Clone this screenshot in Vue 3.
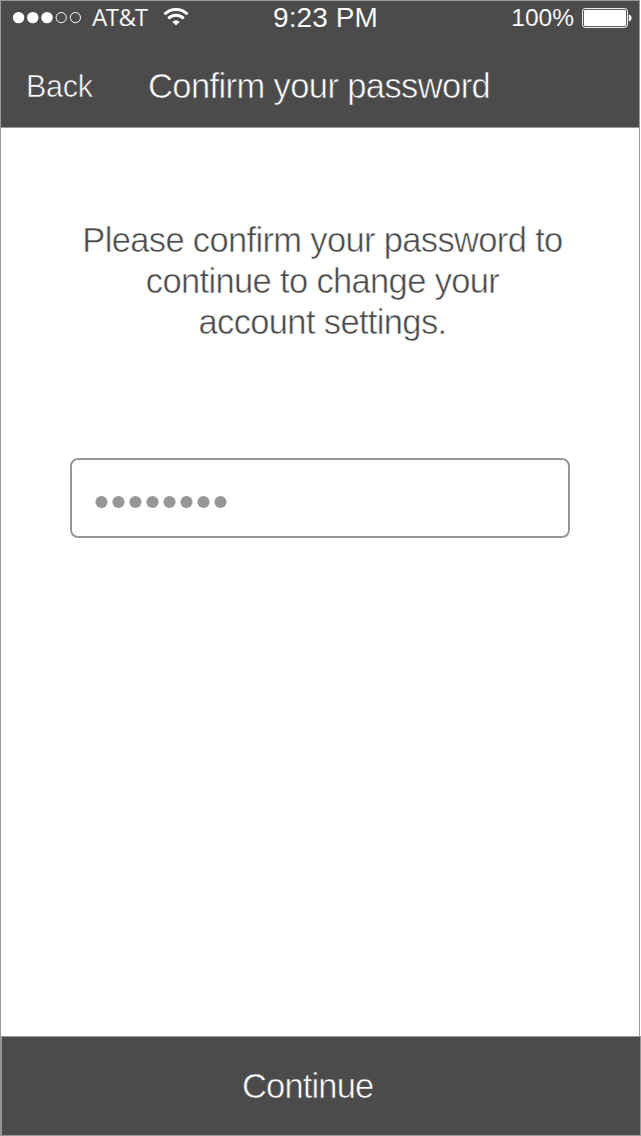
<script setup>
const signal = [true, true, true, false, false]
const message = ['Please confirm your password to', 'continue to change your', 'account settings.']
</script>

<template>
  <div class="screen">
    <header class="top">
      <div class="status">
        <div class="carrier">
          <svg class="signal" width="70" height="14" viewBox="0 0 70 14">
            <circle
              v-for="(on, i) in signal"
              :key="i"
              :cx="6.6 + i * 14.2"
              cy="6.6"
              :r="on ? 5.7 : 5.1"
              :fill="on ? '#fff' : 'none'"
              :stroke="on ? 'none' : '#fff'"
            />
          </svg>
          <span class="network">AT&amp;T</span>
          <svg class="wifi" width="26" height="18" viewBox="0 0 26 18" fill="none" stroke="#fff" stroke-width="2.9">
            <path d="M1.5 6.3A16.2 16.2 0 0 1 24.5 6.3" />
            <path d="M5.3 10.5A10.9 10.9 0 0 1 20.7 10.5" />
            <path d="M9.2 13.8A5.9 5.9 0 0 1 16.8 13.8L13 17.6Z" fill="#fff" stroke="none" />
          </svg>
        </div>
        <span class="time">9:23 PM</span>
        <div class="power">
          <span class="percent">100%</span>
          <svg width="50" height="20" viewBox="0 0 50 20">
            <rect x=".6" y=".6" width="44.8" height="18.8" rx="2.6" fill="none" stroke="#fff" />
            <rect x="2" y="2" width="42" height="16" rx="1.2" fill="#fff" />
            <path d="M46.8 6.2Q49.7 7.3 49.7 10T46.8 13.8Z" fill="#fff" />
          </svg>
        </div>
      </div>
      <nav class="nav">
        <span class="back">Back</span>
        <h1 class="title">Confirm your password</h1>
      </nav>
    </header>
    <main class="content">
      <p class="message">
        <span v-for="line in message" :key="line" class="line">{{ line }}</span>
      </p>
      <div class="field">
        <svg width="134" height="14" viewBox="0 0 134 14" fill="#979797">
          <circle v-for="n in 8" :key="n" :cx="7.5 + (n - 1) * 17" cy="7" r="6.1" />
        </svg>
      </div>
    </main>
    <footer class="continue"><span>Continue</span></footer>
  </div>
</template>

<style>
body {
  background: #fff;
}
</style>

<style scoped>
.screen {
  box-sizing: border-box;
  width: 641px;
  height: 1136px;
  display: flex;
  flex-direction: column;
  overflow: hidden;
  background: #fff;
  font-family: "Liberation Sans", Arial, sans-serif;
  color: #fff;
  white-space: nowrap;
}
.top {
  box-sizing: border-box;
  width: 640px;
  height: 128px;
  flex: none;
  background: #4b4b4b;
  border: 1px solid #979797;
}
.status {
  height: 34px;
  display: grid;
  grid-template-columns: 272px 120px 1fr;
  align-items: center;
}
.carrier {
  display: flex;
  align-items: center;
  padding-left: 11px;
}
.network {
  width: 71px;
  margin-left: 10px;
  margin-top: -2px;
  font: 400 24px/32px "Noto Sans", sans-serif;
  letter-spacing: 0;
  -webkit-text-stroke: 0.2px #4b4b4b;
}
.wifi {
  margin-top: -2px;
}
.time {
  font-size: 28px;
  line-height: 34px;
  letter-spacing: 0.1px;
  -webkit-text-stroke: 0.1px #4b4b4b;
}
.power {
  display: flex;
  align-items: center;
  justify-content: flex-end;
  gap: 8px;
  padding-right: 7px;
}
.percent {
  font-size: 24.5px;
  line-height: 34px;
  -webkit-text-stroke: 0.1px #4b4b4b;
}
.nav {
  height: 92px;
  display: flex;
  align-items: baseline;
  padding: 29px 0 0 25px;
  box-sizing: border-box;
}
.back {
  position: relative;
  top: -1px;
  width: 122px;
  font-size: 30.5px;
  letter-spacing: -0.3px;
  -webkit-text-stroke: 0.6px #4b4b4b;
}
.title {
  margin: 0;
  font-size: 34.5px;
  line-height: 44px;
  font-weight: 400;
  letter-spacing: -0.6px;
  -webkit-text-stroke: 0.6px #4b4b4b;
}
.content {
  box-sizing: border-box;
  width: 640px;
  flex: 1;
  display: flex;
  flex-direction: column;
  border: solid #979797;
  border-width: 0 1px;
}
.message {
  margin: 92px 0 0 5px;
  color: #4b4b4b;
  font-size: 34.5px;
  line-height: 41px;
  letter-spacing: -0.65px;
  text-align: center;
  -webkit-text-stroke: 0.5px #fff;
}
.line {
  display: block;
}
.field {
  box-sizing: border-box;
  width: 500px;
  height: 80px;
  margin: 115px 0 0 69px;
  padding: 7px 0 0 22px;
  display: flex;
  align-items: center;
  border: 2px solid #979797;
  border-radius: 8px;
}
.continue {
  box-sizing: border-box;
  height: 100px;
  flex: none;
  padding-left: 240px;
  border: 1px solid #979797;
  border-left-width: 2px;
  background: #4b4b4b;
  font-size: 34.5px;
  line-height: 98px;
  letter-spacing: -0.85px;
  -webkit-text-stroke: 0.6px #4b4b4b;
}
</style>
